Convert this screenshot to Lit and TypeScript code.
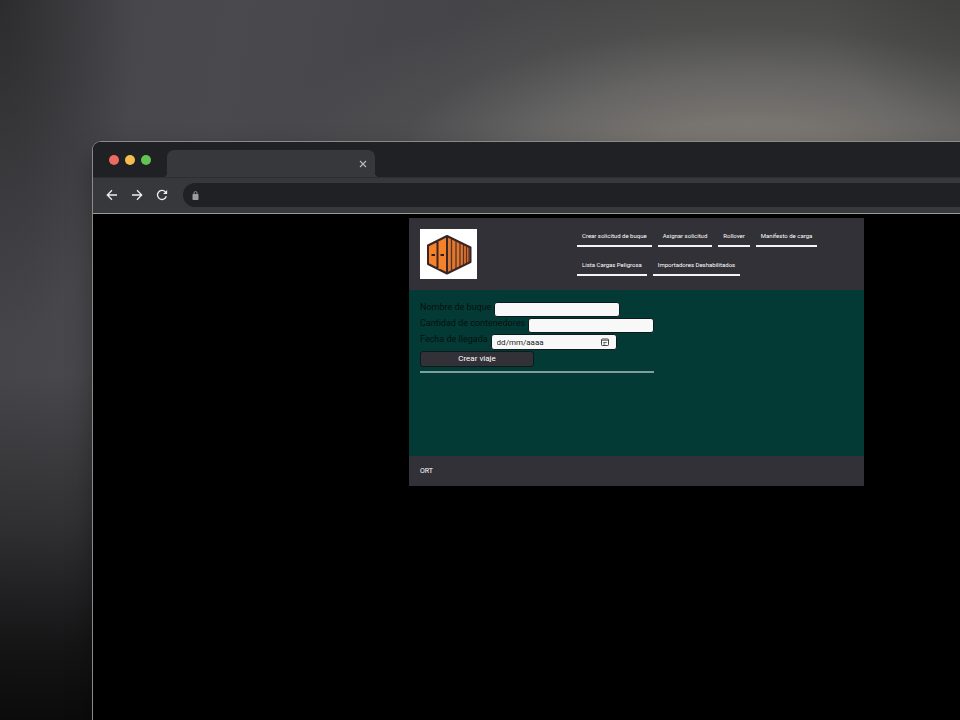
import { LitElement, html, css } from "lit";
import { customElement } from "lit/decorators.js";

const NAV_LINKS = [
  "Crear solicitud de buque",
  "Asignar solicitud",
  "Rollover",
  "Manifesto de carga",
  "Lista Cargas Peligrosa",
  "Importadores Deshabilitados",
];

@customElement("container-logo")
class ContainerLogo extends LitElement {
  static styles = css`
    :host { display: block; width: 57px; height: 50px; background: #fff; }
    .art { display: block; width: 100%; height: 100%; }
  `;
  render() {
    return html`<svg class="art" viewBox="0 0 57 50" role="img" aria-label="Logo">
      <path d="M27 7 8 16.500v18.500L27 44.500z" fill="#f58229" />
      <path d="M27 7 50.500 18.500v14.500L27 44.500z" fill="#de782e" />
      <path d="M31.500 9.500v32M36 12v28M40 14v24M43.500 16v20M46.500 17v18M49 18v15" fill="none" stroke="#5a3024" stroke-width="1.300" />
      <path d="M27 7 8 16.500v18.500L27 44.500l23.500-11.500v-14.500z M27 7v37 M17.500 12v28" fill="none" stroke="#3b2426" stroke-width="2" stroke-linejoin="round" />
      <path d="M11.500 26h3.500M20.500 26h3.500" stroke="#2d1d22" stroke-width="2" />
    </svg>`;
  }
}

@customElement("voyage-page")
class VoyagePage extends LitElement {
  static styles = css`
    * { box-sizing: border-box; }
    :host { display: block; color: #fff; font-family: Roboto, "Liberation Sans", sans-serif; }
    .header {
      display: grid; grid-template-columns: 157px 1fr;
      padding: 11px; background: #323137;
    }
    .nav { display: flex; flex-wrap: wrap; align-content: flex-start; gap: 11px 6px; }
    .link {
      padding: 3px 5px 6px; border-bottom: 2px solid #f4f4f6;
      color: #fff; font-size: 6px; line-height: 7px; text-decoration: none; white-space: nowrap;
    }
    .main { min-height: 166px; padding: 12px 11px; background: #033a35; }
    .form { display: flex; flex-direction: column; gap: 1px; width: fit-content; }
    .field { display: flex; align-items: flex-start; gap: 3px; }
    .label { color: #04100f; font-size: 9px; line-height: 11px; white-space: nowrap; }
    .box { position: relative; display: flex; width: 126px; }
    .input {
      width: 100%; height: 15px; padding: 0 5px; border: 1px solid #0c1c1b; border-radius: 3px;
      background: #f8f8f8; color: #222; font-family: inherit; font-size: 8px; outline: none;
    }
    .input::placeholder { color: #222; opacity: 1; }
    .date { height: 16px; }
    .picker {
      position: absolute; top: 4px; right: 8px; display: flex;
      padding: 0; border: 0; background: none;
    }
    .submit {
      width: 114px; height: 16px; padding: 0; border: 1px solid #0b1a1a; border-radius: 3px;
      background: #323137; color: #fff; font-family: inherit; font-size: 8px; line-height: 14px;
    }
    .rule { width: 100%; height: 2px; margin: 3px 0 0; border: 0; background: #7f9f9c; }
    .footer { padding: 11px; background: #323137; font-size: 7px; line-height: 8px; }
  `;
  render() {
    return html`
      <header class="header">
        <container-logo></container-logo>
        <nav class="nav">${NAV_LINKS.map((t) => html`<a class="link" href="#">${t}</a>`)}</nav>
      </header>
      <main class="main">
        <form class="form">
          <div class="field">
            <label class="label" for="ship">Nombre de buque</label>
            <div class="box"><input class="input" id="ship" type="text" /></div>
          </div>
          <div class="field">
            <label class="label" for="count">Cantidad de contenedores</label>
            <div class="box"><input class="input" id="count" type="text" inputmode="numeric" /></div>
          </div>
          <div class="field">
            <label class="label" for="arrival">Fecha de llegada</label>
            <div class="box">
              <input class="input date" id="arrival" type="text" placeholder="dd/mm/aaaa" />
              <button class="picker" type="button" aria-label="Abrir calendario">
                <svg width="8" height="8" viewBox="0 0 8 8" fill="none" stroke="#444">
                  <rect x=".5" y="1" width="7" height="6.500" rx=".8" />
                  <path d="M.5 2.300h7M2.200 4.500h3.600M2.200 6h2" stroke-width=".8" />
                </svg>
              </button>
            </div>
          </div>
          <button class="submit" type="button">Crear viaje</button>
          <hr class="rule" />
        </form>
      </main>
      <footer class="footer">ORT</footer>
    `;
  }
}

@customElement("app-root")
class AppRoot extends LitElement {
  static styles = css`
    * { box-sizing: border-box; }
    :host {
      box-sizing: border-box;
      display: flex; min-height: 100vh; overflow: hidden; padding: 141px 0 0 92px;
      background:
        linear-gradient(180deg, transparent 52%, rgba(24, 24, 25, 0.5) 73%, rgba(16, 16, 17, 0.92) 90%, #0b0b0b 100%),
        radial-gradient(ellipse 14% 48% at 0 0, rgba(38, 38, 40, 0.8), transparent),
        radial-gradient(ellipse 14% 18% at 100% 0, rgba(46, 46, 46, 0.3), transparent),
        radial-gradient(ellipse 50% 26% at 78% 23%, #807b75 0%, #78746f 24%, rgba(112, 111, 110, 0.75) 48%, rgba(92, 92, 92, 0.35) 74%, transparent 100%),
        linear-gradient(100deg, #454448 0%, #4a494d 22%, #454448 42%, #464645 62%, #464645 100%);
    }
    .window {
      display: flex; flex: 1 0 auto; flex-direction: column; width: calc(100% + 221px); margin-right: -221px;
      overflow: hidden; border: 1px solid #8a8a8a; border-bottom: 0;
      border-radius: 9px 9px 0 0; background: #000;
      box-shadow: 0 12px 26px rgba(0, 0, 0, 0.35);
    }
    .strip {
      display: flex; height: 36px; padding-left: 16px; background: #202124;
      border-bottom: 1px solid #2d2e31;
    }
    .lights { display: flex; gap: 6px; width: 58px; padding-top: 13px; }
    .light { width: 10px; height: 10px; padding: 0; border: 0; border-radius: 50%; }
    .red { background: #ed6a5e; }
    .yellow { background: #f4be4f; }
    .green { background: #61c554; }
    .tab {
      position: relative; display: flex; align-items: center; justify-content: flex-end;
      width: 208px; height: 27px; margin-top: 8px; padding-right: 7px;
      border-radius: 7px 7px 0 0; background: #37383c;
    }
    .tab::before, .tab::after {
      content: ""; position: absolute; bottom: 0; width: 4px; height: 4px;
    }
    .tab::before { right: 100%; background: radial-gradient(circle at 0 0, transparent 4px, #37383c 4px); }
    .tab::after { left: 100%; background: radial-gradient(circle at 100% 0, transparent 4px, #37383c 4px); }
    .icon { display: flex; padding: 0; border: 0; background: none; color: #eeeeef; }
    .close { color: #b9babc; }
    .toolbar {
      display: flex; align-items: center; gap: 11px; height: 36px; padding: 0 0 1px 12px;
      border-bottom: 1px solid #9a9b99; background: #37383c;
    }
    .address {
      display: flex; flex: 1; align-items: center; gap: 8px; height: 24px; margin-left: 3px;
      padding-left: 9px; border-radius: 12px; background: #202124;
    }
    .url {
      flex: 1; border: 0; outline: none; background: none; color: #eee;
      font: 12px Roboto, sans-serif;
    }
    .viewport { flex: 1; padding-top: 4px; }
    .page { width: 42%; max-width: 455px; margin: 0 auto; }
  `;
  render() {
    return html`
      <div class="window">
        <div class="strip">
          <div class="lights">
            <button class="light red" aria-label="Cerrar"></button>
            <button class="light yellow" aria-label="Minimizar"></button>
            <button class="light green" aria-label="Maximizar"></button>
          </div>
          <div class="tab">
            <button class="icon close" aria-label="Cerrar pestaña">
              <svg width="10" height="10" viewBox="0 0 10 10" fill="none" stroke="currentColor" stroke-width="1.100">
                <path d="m2 2 6 6M8 2 2 8" />
              </svg>
            </button>
          </div>
        </div>
        <div class="toolbar">
          <button class="icon" aria-label="Atrás">
            <svg width="14" height="14" viewBox="0 0 14 14" fill="none" stroke="currentColor" stroke-width="1.300">
              <path d="M12 7H2.500M7 2.300 2.300 7 7 11.700" />
            </svg>
          </button>
          <button class="icon" aria-label="Adelante">
            <svg width="14" height="14" viewBox="0 0 14 14" fill="none" stroke="currentColor" stroke-width="1.300">
              <path d="M2 7h9.500M7 2.300 11.700 7 7 11.700" />
            </svg>
          </button>
          <button class="icon" aria-label="Recargar">
            <svg width="14" height="14" viewBox="0 0 14 14" fill="none" stroke="currentColor" stroke-width="1.300">
              <path d="M11.300 8.300A4.500 4.500 0 1 1 10.300 3.900L11.500 5.200" />
              <path d="M12.100 2v4H8.100z" fill="currentColor" stroke="none" />
            </svg>
          </button>
          <div class="address">
            <svg width="7" height="9" viewBox="0 0 7 9" aria-hidden="true">
              <rect x=".5" y="3" width="6" height="6" rx=".7" fill="#9b9ca0" />
              <path d="M2 3.500V2a1.500 1.500 0 0 1 3 0v1.500" fill="none" stroke="#9b9ca0" stroke-width=".9" />
            </svg>
            <input class="url" type="text" aria-label="Dirección" />
          </div>
        </div>
        <div class="viewport"><voyage-page class="page"></voyage-page></div>
      </div>
    `;
  }
}
